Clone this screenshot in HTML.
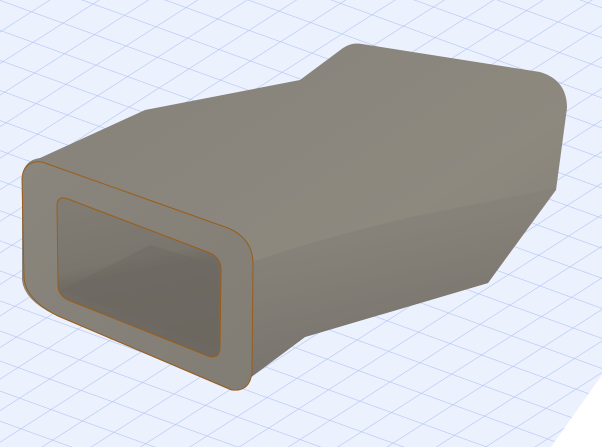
<!DOCTYPE html>
<html><head><style>
html,body{margin:0;padding:0;background:#fff;}
svg{display:block}
</style></head><body>
<svg width="602" height="447" viewBox="0 0 602 447" xmlns="http://www.w3.org/2000/svg">
<defs>
<pattern id="g" width="30" height="30" patternUnits="userSpaceOnUse" patternTransform="matrix(1.05,0.38,-1.0,0.64,0,0)">
<rect width="30" height="30" fill="#ecf1fe"/>
<path d="M0 0H30M0 0V30" stroke="#b0c4f5" stroke-width="1.3" fill="none"/>
</pattern>
<linearGradient id="top" x1="0" y1="0" x2="1" y2="1">
<stop offset="0" stop-color="#85817a"/><stop offset="0.6" stop-color="#8d897f"/><stop offset="1" stop-color="#7e7a72"/>
</linearGradient>
<linearGradient id="side" x1="0" y1="0" x2="0.3" y2="1">
<stop offset="0" stop-color="#8d897f"/><stop offset="1" stop-color="#74706a"/>
</linearGradient>
<linearGradient id="front" x1="0" y1="0" x2="1" y2="1">
<stop offset="0" stop-color="#8a867d"/><stop offset="1" stop-color="#817d74"/>
</linearGradient>
<linearGradient id="inner" x1="0" y1="0" x2="0.2" y2="1">
<stop offset="0" stop-color="#817d75"/><stop offset="0.45" stop-color="#7a766e"/><stop offset="0.55" stop-color="#706c64"/><stop offset="1" stop-color="#6d6962"/>
</linearGradient>
</defs>
<rect width="602" height="447" fill="url(#g)"/>
<path d="M602 375 L602 447 L551 447 Z" fill="#fff"/>
<path d="M22,175 Q25,160 40,158 L145,110 L300,80 L343,48 Q352,42 362,44 L540,72 Q567,80 567,108 L556,190 L488,283 L305,337 L250,378 Q242,392 230,390 L55,315 Q24,300 22,280 Z" fill="url(#top)"/>
<path d="M252,262 Q320,238 420,215 L556,188 L488,283 L305,337 L250,378 Z" fill="url(#side)" opacity="0.85"/>
<path d="M22,178 Q24,160 42,162 L228,228 Q252,238 253,262 L252,372 Q250,392 232,390 L58,316 Q26,300 24,278 Z" fill="url(#front)" stroke="#9c5c18" stroke-width="1"/>
<path d="M57,205 Q58,195 68,199 L210,253 Q221,258 221,270 L220,348 Q219,360 208,356 L68,300 Q58,295 58,285 Z" fill="url(#inner)" stroke="#9c5c18" stroke-width="1"/>
<path d="M62,290 L150,245 L218,265 L218,350 Z" fill="#6b6760" opacity="0.4"/>
</svg>
</body></html>
